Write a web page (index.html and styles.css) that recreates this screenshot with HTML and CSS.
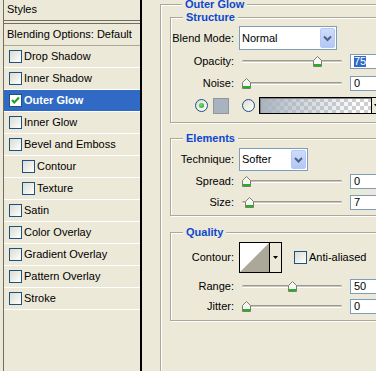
FILE: index.html
```html
<!DOCTYPE html>
<html>
<head>
<meta charset="utf-8">
<title>Layer Style</title>
<link rel="stylesheet" href="styles.css">
</head>
<body>
<div class="app">
  <aside class="styles">
    <div class="styles-head">Styles</div>
    <ul class="style-list">
      <li class="item item-blend">Blending Options: Default</li>
      <li class="item"><span class="cb"></span>Drop Shadow</li>
      <li class="item"><span class="cb"></span>Inner Shadow</li>
      <li class="item selected"><span class="cb checked"><svg width="11" height="11" viewBox="0 0 11 11"><path d="M2 5 L4.3 7.4 L9 2.6" fill="none" stroke="#21a121" stroke-width="2.2"/></svg></span>Outer Glow</li>
      <li class="item"><span class="cb"></span>Inner Glow</li>
      <li class="item"><span class="cb"></span>Bevel and Emboss</li>
      <li class="item sub"><span class="cb"></span>Contour</li>
      <li class="item sub"><span class="cb"></span>Texture</li>
      <li class="item"><span class="cb"></span>Satin</li>
      <li class="item"><span class="cb"></span>Color Overlay</li>
      <li class="item"><span class="cb"></span>Gradient Overlay</li>
      <li class="item"><span class="cb"></span>Pattern Overlay</li>
      <li class="item"><span class="cb"></span>Stroke</li>
    </ul>
  </aside>

  <main class="settings">
    <section class="group outer">
      <h2 class="group-title">Outer Glow</h2>

      <section class="group structure">
        <h3 class="group-title">Structure</h3>
        <div class="row row-blend">
          <span class="label">Blend Mode:</span>
          <div class="select select-blend">
            <span class="select-value">Normal</span>
            <span class="select-btn"><svg width="15" height="20" viewBox="0 0 15 20"><path d="M4 8.5 L7.5 12 L11 8.5" fill="none" stroke="#4d6185" stroke-width="2"/></svg></span>
          </div>
        </div>
        <div class="row row-opacity">
          <span class="label">Opacity:</span>
          <div class="slider"><div class="track"></div><span class="thumb" style="left:74px"><svg width="9" height="11" viewBox="0 0 9 11"><path d="M0.5 4.5 L4.5 0.5 L8.5 4.5 V10.5 H0.5 Z" fill="#f6f6f2" stroke="#7d7d72"/><rect x="1" y="8" width="7" height="2" fill="#21b321"/></svg></span></div>
          <div class="num"><span class="num-sel">75</span></div>
        </div>
        <div class="row row-noise">
          <span class="label">Noise:</span>
          <div class="slider"><div class="track"></div><span class="thumb" style="left:3px"><svg width="9" height="11" viewBox="0 0 9 11"><path d="M0.5 4.5 L4.5 0.5 L8.5 4.5 V10.5 H0.5 Z" fill="#f6f6f2" stroke="#7d7d72"/><rect x="1" y="8" width="7" height="2" fill="#21b321"/></svg></span></div>
          <div class="num">0</div>
        </div>
        <div class="row row-radio">
          <span class="radio on"><span class="dot"></span></span>
          <span class="swatch"></span>
          <span class="radio"></span>
          <span class="gradient"></span>
          <span class="grad-arrow"><svg width="5" height="3" viewBox="0 0 5 3"><path d="M0 0 H5 L2.5 3 Z" fill="#000"/></svg></span>
        </div>
      </section>

      <section class="group elements">
        <h3 class="group-title">Elements</h3>
        <div class="row row-technique">
          <span class="label">Technique:</span>
          <div class="select select-tech">
            <span class="select-value">Softer</span>
            <span class="select-btn"><svg width="15" height="19" viewBox="0 0 15 19"><path d="M4 8 L7.5 11.5 L11 8" fill="none" stroke="#4d6185" stroke-width="2"/></svg></span>
          </div>
        </div>
        <div class="row row-spread">
          <span class="label">Spread:</span>
          <div class="slider"><div class="track"></div><span class="thumb" style="left:3px"><svg width="9" height="11" viewBox="0 0 9 11"><path d="M0.5 4.5 L4.5 0.5 L8.5 4.5 V10.5 H0.5 Z" fill="#f6f6f2" stroke="#7d7d72"/><rect x="1" y="8" width="7" height="2" fill="#21b321"/></svg></span></div>
          <div class="num">0</div>
        </div>
        <div class="row row-size">
          <span class="label">Size:</span>
          <div class="slider"><div class="track"></div><span class="thumb" style="left:6px"><svg width="9" height="11" viewBox="0 0 9 11"><path d="M0.5 4.5 L4.5 0.5 L8.5 4.5 V10.5 H0.5 Z" fill="#f6f6f2" stroke="#7d7d72"/><rect x="1" y="8" width="7" height="2" fill="#21b321"/></svg></span></div>
          <div class="num">7</div>
        </div>
      </section>

      <section class="group quality">
        <h3 class="group-title">Quality</h3>
        <div class="row row-contour">
          <span class="label">Contour:</span>
          <div class="contour">
            <span class="contour-preview"><svg width="29" height="29" viewBox="0 0 29 29"><rect width="29" height="29" fill="#fff"/><polygon points="0,29 29,0 29,29" fill="#aca899"/></svg></span>
            <span class="contour-arrow"><svg width="5" height="3" viewBox="0 0 5 3"><path d="M0 0 H5 L2.5 3 Z" fill="#000"/></svg></span>
          </div>
          <span class="cb aa"></span><span class="aa-label">Anti-aliased</span>
        </div>
        <div class="row row-range">
          <span class="label">Range:</span>
          <div class="slider"><div class="track"></div><span class="thumb" style="left:49px"><svg width="9" height="11" viewBox="0 0 9 11"><path d="M0.5 4.5 L4.5 0.5 L8.5 4.5 V10.5 H0.5 Z" fill="#f6f6f2" stroke="#7d7d72"/><rect x="1" y="8" width="7" height="2" fill="#21b321"/></svg></span></div>
          <div class="num">50</div>
        </div>
        <div class="row row-jitter">
          <span class="label">Jitter:</span>
          <div class="slider"><div class="track"></div><span class="thumb" style="left:3px"><svg width="9" height="11" viewBox="0 0 9 11"><path d="M0.5 4.5 L4.5 0.5 L8.5 4.5 V10.5 H0.5 Z" fill="#f6f6f2" stroke="#7d7d72"/><rect x="1" y="8" width="7" height="2" fill="#21b321"/></svg></span></div>
          <div class="num">0</div>
        </div>
      </section>
    </section>
  </main>
</div>
</body>
</html>
```

FILE: styles.css
```css
* {
  box-sizing: border-box;
  margin: 0;
  padding: 0;
}

html, body {
  width: 376px;
  height: 371px;
  overflow: hidden;
}

body {
  background: #ece9d8;
  font-family: "Liberation Sans", Arial, sans-serif;
  font-size: 11px;
  line-height: 13px;
  color: #000;
}

.app {
  display: flex;
  align-items: flex-start;
}

/* ---------- Styles list ---------- */
.styles {
  flex: none;
  margin-left: 3px;
  width: 139px;
  height: 400px;
  border-left: 1px solid #716f64;
  border-right: 2px solid #000;
}

.styles-head {
  height: 21px;
  line-height: 19px;
  padding-left: 3px;
  border-bottom: 1px solid #716f64;
  margin-bottom: 2px;
}

.style-list {
  list-style: none;
  border-top: 1px solid #716f64;
}

.item {
  display: flex;
  align-items: center;
  height: 22px;
  border-bottom: 1px solid #fff;
  white-space: nowrap;
}

.item-blend {
  padding-left: 3px;
  border-bottom-color: #aca899;
}

.item.selected {
  background: #316ac5;
  color: #fff;
  font-weight: bold;
}

.cb {
  flex: none;
  display: flex;
  align-items: center;
  justify-content: center;
  width: 13px;
  height: 13px;
  margin: 0 2px 0 5px;
  border: 1px solid #1c5180;
  background: linear-gradient(135deg, #dcdcd5 0%, #f4f4f0 70%, #fff 100%);
}

.cb.checked {
  background: #fff;
}

.item.sub .cb {
  margin-left: 18px;
}

/* ---------- Settings ---------- */
.settings {
  flex: none;
  width: 250px;
  margin-left: 18px;
}

.group {
  border: 1px solid #aca899;
  box-shadow: inset 1px 1px 0 #fff, 1px 1px 0 #fff;
}

.group-title {
  width: fit-content;
  height: 13px;
  margin: -7px 0 0 12px;
  padding: 0 3px;
  background: #ece9d8;
  color: #0b47cf;
  font-size: 11px;
  line-height: 13px;
  font-weight: bold;
}

.outer {
  margin-top: 4px;
  height: 400px;
  padding-left: 9px;
  border-right: none;
}

.structure {
  margin-top: 6px;
  padding-bottom: 8px;
  border-right: none;
}

.elements {
  margin-top: 15px;
  padding-bottom: 5px;
  border-right: none;
}

.quality {
  margin-top: 16px;
  padding-bottom: 6px;
  border-right: none;
}

.row {
  display: flex;
  align-items: center;
  white-space: nowrap;
}

.label {
  flex: none;
  width: 63px;
  margin-right: 5px;
  text-align: right;
}

.row-blend { margin-top: 2px; height: 24px; }
.row-opacity { margin-top: 4px; height: 15px; }
.row-noise { margin-top: 7px; height: 15px; }
.row-radio { margin-top: 6px; height: 17px; padding-left: 24px; }

.row-technique { margin-top: 3px; height: 23px; }
.row-spread { margin-top: 3px; height: 15px; }
.row-size { margin-top: 6px; height: 15px; }

.row-contour { margin-top: 3px; height: 31px; }
.row-range { margin-top: 6px; height: 15px; }
.row-jitter { margin-top: 5px; height: 15px; }

/* select */
.select {
  flex: none;
  display: flex;
  height: 100%;
  border: 1px solid #7f9db9;
  background: #fff;
}

.select-blend { width: 98px; }
.select-tech { width: 69px; }

.select-value {
  flex: 1;
  padding-left: 2px;
  display: flex;
  align-items: center;
}

.select-btn {
  flex: none;
  display: flex;
  width: 15px;
  margin: 1px 1px 1px 0;
  border: 1px solid #b5c8f5;
  border-radius: 2px;
  background: linear-gradient(#cddcfc, #b3c7f5);
}

.select-btn svg {
  margin: -1px;
}

/* slider */
.slider {
  position: relative;
  flex: none;
  width: 106px;
  height: 15px;
}

.track {
  margin: 6px 3px 0;
  height: 3px;
  border-radius: 2px;
  border-top: 1px solid #9c9a8e;
  border-bottom: 1px solid #fff;
  background: #c9c6b8;
}

.thumb {
  position: absolute;
  top: 2px;
  display: block;
  width: 9px;
  height: 11px;
  line-height: 0;
}

/* number input */
.num {
  flex: none;
  width: 44px;
  height: 15px;
  margin-left: 5px;
  padding-left: 3px;
  border: 1px solid #7f9db9;
  background: #fff;
  line-height: 13px;
}

.num-sel {
  display: inline-block;
  height: 11px;
  margin-top: 1px;
  line-height: 11px;
  background: #316ac5;
  color: #fff;
  vertical-align: top;
}

/* radio row */
.radio {
  flex: none;
  display: flex;
  align-items: center;
  justify-content: center;
  width: 13px;
  height: 13px;
  border-radius: 50%;
  border: 1px solid #1c5180;
  background: linear-gradient(135deg, #dcdcd5, #fff);
}

.radio .dot {
  width: 5px;
  height: 5px;
  border-radius: 50%;
  background: radial-gradient(circle at 40% 40%, #6fe06f, #21a121);
}

.radio.on {
  margin-right: 5px;
}

.swatch {
  flex: none;
  width: 16px;
  height: 16px;
  margin-right: 13px;
  border: 1px solid #8e969f;
  background: #a8b3bf;
}

.radio + .gradient {
  margin-left: 4px;
}

.gradient {
  flex: none;
  width: 113px;
  height: 17px;
  border: 1px solid #000;
  box-shadow: inset 1px 1px 0 #808080;
  background:
    linear-gradient(to right, rgba(168, 179, 191, 1) 0%, rgba(168, 179, 191, 0.55) 35%, rgba(168, 179, 191, 0) 90%),
    linear-gradient(45deg, #cfcfcf 25%, transparent 25%, transparent 75%, #cfcfcf 75%),
    linear-gradient(45deg, #cfcfcf 25%, transparent 25%, transparent 75%, #cfcfcf 75%),
    #fff;
  background-size: 100% 100%, 8px 8px, 8px 8px, auto;
  background-position: 0 0, 0 0, 4px 4px, 0 0;
}

.grad-arrow {
  flex: none;
  display: flex;
  align-items: center;
  justify-content: center;
  width: 9px;
  height: 17px;
  border: 1px solid #000;
  border-left: none;
  background: #ece9d8;
}

/* contour */
.contour {
  flex: none;
  display: flex;
  width: 43px;
  height: 31px;
  border: 1px solid #000;
  background: #ece9d8;
}

.contour-preview {
  flex: none;
  width: 30px;
  height: 29px;
  border-right: 1px solid #000;
  line-height: 0;
}

.contour-arrow {
  flex: 1;
  display: flex;
  align-items: center;
  justify-content: center;
}

.cb.aa {
  margin: 0 2px 0 12px;
}
```
